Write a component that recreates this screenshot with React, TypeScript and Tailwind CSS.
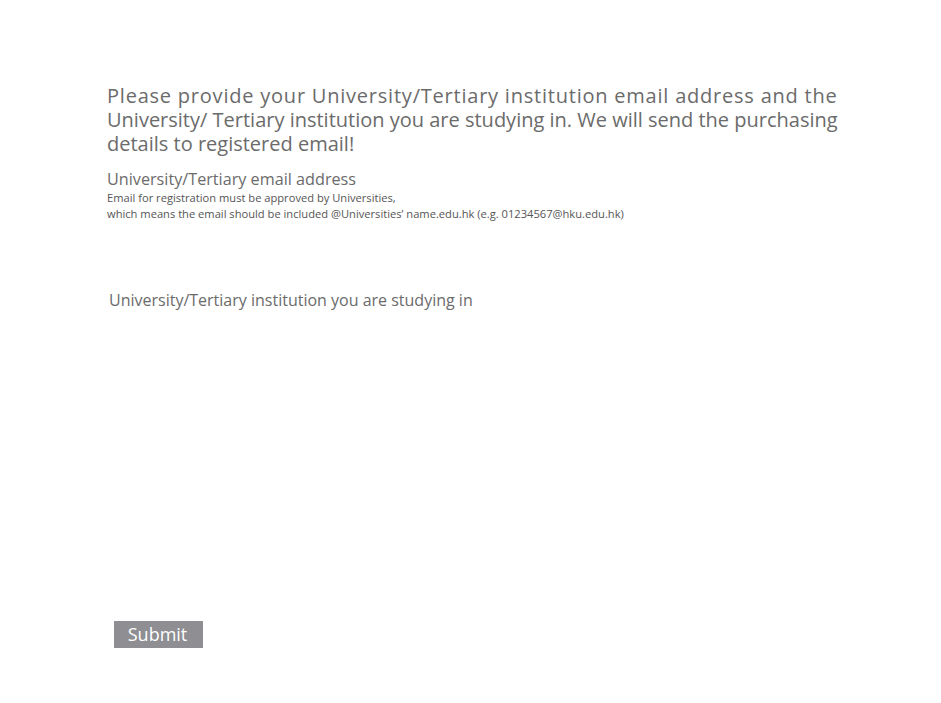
export default function App() {
  return (
    <div className="min-h-[703px] w-[941px] bg-white" style={{ fontFamily: '"Open Sans", "Noto Sans", sans-serif' }}>
      <div className="pl-[107px] pr-[60px] pt-[84px] text-[#6b6b6b]">
        <h1 className="whitespace-nowrap text-[20px] leading-[24px]">
          <span className="tracking-[0.78px]">Please provide your University/Tertiary institution email address and the</span>
          <br />
          University/ Tertiary institution you are studying in. We will send the purchasing
          <br />
          details to registered email!
        </h1>
        <div className="mt-[13px] text-[16.2px] leading-[20px]">University/Tertiary email address</div>
        <div className="mt-[1px] text-[11.15px] leading-[16px] text-[#555]">
          Email for registration must be approved by Universities,
          <br />
          which means the email should be included @Universities’ name.edu.hk (e.g. 01234567@hku.edu.hk)
        </div>
        <div className="mt-[68px] pl-[2px] text-[16px] leading-[20px]">University/Tertiary institution you are studying in</div>
        <div className="pl-[7px] pt-[311px]">
          <button className="h-[27px] w-[89px] bg-[#8e8e93] pr-[2px] text-[18px] leading-[27px] text-white">Submit</button>
        </div>
      </div>
    </div>
  );
}
